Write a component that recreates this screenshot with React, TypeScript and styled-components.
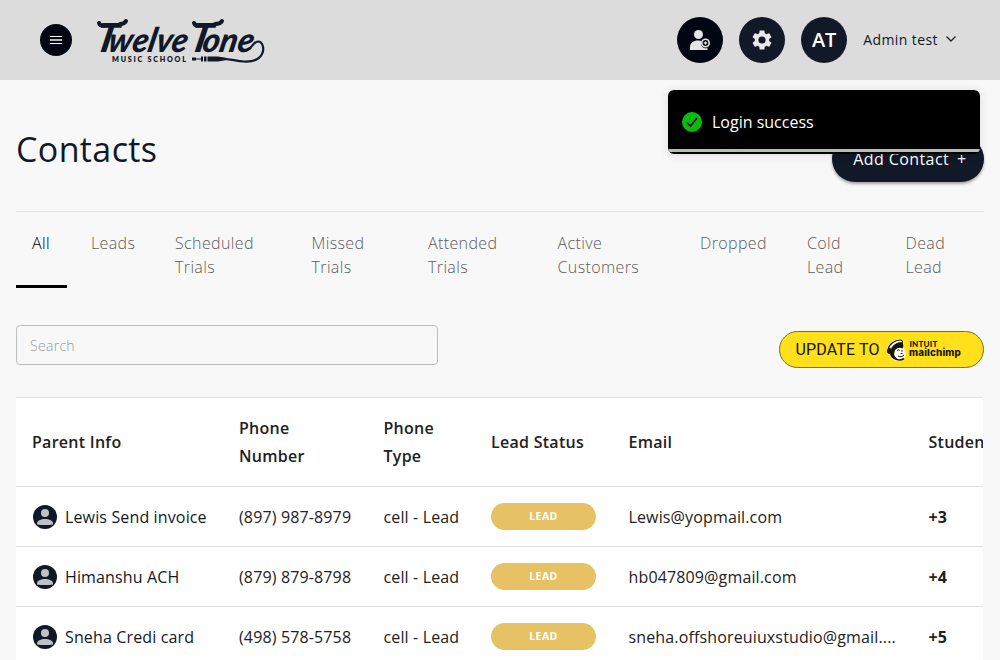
import React from "react";
import styled, { createGlobalStyle } from "styled-components";

const GlobalStyle = createGlobalStyle`
  * { box-sizing: border-box; }
  html, body { margin: 0; height: 100%; overflow: hidden; }
  body { background: #f8f8f8; color: #111827; font-family: "Open Sans", "Noto Sans", sans-serif; }
  button, input { font-family: inherit; }
`;

const Page = styled.div`
  height: 660px;
  overflow: hidden;
`;

const TopBar = styled.header`
  display: flex;
  align-items: center;
  height: 80px;
  padding: 0 43px 0 40px;
  background: #dcdcdc;
`;

const RoundButton = styled.button<{ $size: number; $dark?: boolean }>`
  display: flex;
  align-items: center;
  justify-content: center;
  width: ${(p) => p.$size}px;
  height: ${(p) => p.$size}px;
  padding: 0;
  border: 0;
  border-radius: 50%;
  background: ${(p) => (p.$dark ? "#000612" : "#111827")};
  color: #fff;
  font-size: 20px;
  line-height: 26px;
  font-weight: 600;
`;

const Logo = styled.svg`
  display: block;
  margin-left: 22px;
`;

const Actions = styled.div`
  display: flex;
  gap: 16px;
  margin-left: auto;
`;

const UserMenu = styled.div`
  display: flex;
  align-items: center;
  gap: 7px;
  margin-left: 16px;
  padding-bottom: 2px;
  font-size: 14px;
  letter-spacing: 0.42px;
`;

const Main = styled.main`
  padding: 0 16px;
`;

const TitleRow = styled.div`
  display: flex;
  justify-content: space-between;
  height: 132px;
  border-bottom: 1px solid #e3e3e3;
`;

const Title = styled.h1`
  margin: 45px 0 0;
  font-size: 34px;
  line-height: 48px;
  font-weight: 400;
  letter-spacing: 0.38px;
`;

const AddButton = styled.button`
  display: flex;
  align-items: center;
  justify-content: center;
  gap: 8px;
  width: 152px;
  height: 46px;
  margin-top: 56px;
  padding: 0 2px 0 6px;
  border: 0;
  border-radius: 23px;
  background: #111827;
  color: #fff;
  font-size: 16px;
  font-weight: 500;
  letter-spacing: 0.4px;
  white-space: nowrap;
  box-shadow: 0 2px 3px rgba(0, 0, 0, 0.35);
`;

const Tabs = styled.nav`
  display: grid;
  grid-template-columns: 51px 76px 128.5px 108.5px 121.5px 134.5px 99px 90.5px 94.5px;
  column-gap: 8px;
  height: 76px;
`;

const Tab = styled.a<{ $active?: boolean }>`
  padding: 19px 10px 0 16px;
  border-bottom: 3px solid ${(p) => (p.$active ? "#000" : "transparent")};
  color: ${(p) => (p.$active ? "#000" : "#5c5c5c")};
  font-size: 16px;
  line-height: 24px;
  font-weight: 340;
  letter-spacing: 0.38px;
`;

const Tools = styled.div`
  display: flex;
  align-items: flex-start;
  justify-content: space-between;
  height: 72px;
  margin-top: 37px;
`;

const Search = styled.input`
  width: 422px;
  height: 40px;
  padding: 0 13px;
  border: 1px solid #bdbdbd;
  border-radius: 4px;
  background: transparent;
  font-size: 14px;
  font-weight: 300;
  letter-spacing: 0.3px;
  &::placeholder { color: #999; opacity: 1; }
`;

const MailchimpButton = styled.button`
  display: flex;
  align-items: center;
  gap: 6px;
  width: 205px;
  height: 37px;
  margin-top: 6px;
  padding: 0 0 0 15.5px;
  border: 1px solid #7d6f1f;
  border-radius: 19px;
  background: #ffe01b;
  color: #111;
  font-family: Roboto, sans-serif;
  font-size: 16px;
  letter-spacing: 0.15px;
  white-space: nowrap;
`;

const Table = styled.section`
  width: 967px;
  overflow: hidden;
  border-top: 1px solid #e3e3e3;
  background: #fff;
`;

const Row = styled.div<{ $head?: boolean }>`
  display: grid;
  grid-template-columns: 207px 144.5px 107.5px 137.5px 300px 120px;
  align-items: center;
  height: ${(p) => (p.$head ? 89 : 60)}px;
  border-bottom: 1px solid #e0e0e0;
`;

const HeadCell = styled.div`
  padding: 0 16px;
  color: #212121;
  font-size: 16px;
  line-height: 28px;
  font-weight: 550;
  letter-spacing: 0.27px;
`;

const Cell = styled.div<{ $strong?: boolean }>`
  padding: 1px 0 0 16px;
  font-size: 16px;
  line-height: 24px;
  font-weight: ${(p) => (p.$strong ? 700 : 400)};
  letter-spacing: ${(p) => (p.$strong ? 0 : 0.14)}px;
  color: #222;
  white-space: nowrap;
`;

const Person = styled(Cell)`
  display: flex;
  align-items: center;
  gap: 7px;
  color: #111827;
`;

const Chip = styled.div`
  display: flex;
  align-items: center;
  justify-content: center;
  width: 105px;
  height: 27px;
  margin-left: 16px;
  padding-bottom: 1px;
  border-radius: 14px;
  background: #e7c265;
  color: #fff;
  font-size: 10.5px;
  font-weight: 700;
  letter-spacing: 0.4px;
`;

const Toast = styled.div`
  position: absolute;
  top: 90px;
  left: 668px;
  display: flex;
  align-items: center;
  gap: 10px;
  width: 312px;
  height: 64px;
  padding: 0 14px;
  overflow: hidden;
  border-radius: 6px;
  background: #000;
  color: #fff;
  font-size: 16px;
  font-weight: 430;
  box-shadow: 0 1px 10px rgba(0, 0, 0, 0.12);
`;

const Progress = styled.div`
  position: absolute;
  left: 0;
  right: 0;
  bottom: 2px;
  height: 3px;
  background: #b4c0b4;
`;

const tabs = ["All", "Leads", "Scheduled Trials", "Missed Trials", "Attended Trials", "Active Customers", "Dropped", "Cold Lead", "Dead Lead"];
const heads = ["Parent Info", "Phone Number", "Phone Type", "Lead Status", "Email", "Students"];
const rows = [
  ["Lewis Send invoice", "(897) 987-8979", "Lewis@yopmail.com", "+3"],
  ["Himanshu ACH", "(879) 879-8798", "hb047809@gmail.com", "+4"],
  ["Sneha Credi card", "(498) 578-5758", "sneha.offshoreuiuxstudio@gmail....", "+5"],
];

const SchoolLogo = () => (
  <Logo width="172" height="60" viewBox="94 10 172 60" fill="#111827">
    <g fontFamily="Lato, sans-serif" fontWeight="900" fontStyle="italic" fontSize="34">
      <text transform="translate(94 51.5) skewX(-12)" textLength="92" lengthAdjust="spacingAndGlyphs">
        <tspan fontSize="40">T</tspan><tspan dx="-9">welve</tspan>
      </text>
      <text transform="translate(188 51.5) skewX(-12)" textLength="64" lengthAdjust="spacingAndGlyphs">
        <tspan fontSize="40">T</tspan><tspan dx="-9">one</tspan>
      </text>
    </g>
    <g fill="none" stroke="#111827" strokeWidth="4" strokeLinecap="round">
      <path d="M99 23c1 3 4 3 8 2M120 24c3 0 5-1 6-3" />
      <path d="M194 23c1 3 4 3 8 2M215 24c3 0 6-1 7-3" />
    </g>
    <text x="112" y="61.5" fontFamily="Lato, sans-serif" fontWeight="800" fontSize="7.2" textLength="74">MUSIC SCHOOL</text>
    <path d="M249 49c4-3 5-7.500 9-7.500 5 0 6.500 8 4 12.500-3 6-9 8-18 7.500-9-.5-14-3-26-3" fill="none" stroke="#111827" strokeWidth="2.2" />
    <path d="M192 57.500h4v1h5v-2h17l9 1.500v2l-9 1.500h-17v-2h-5v1h-4z" />
    <path d="M203.500 56v6M207 56v6" stroke="#dcdcdc" strokeWidth="1" />
  </Logo>
);

const PersonPlusIcon = () => (
  <svg width="22" height="22" viewBox="0 0 22 22" fill="#e4e5e7">
    <circle cx="9.500" cy="5.500" r="4.500" />
    <path d="M1 21v-3c0-4 3.500-6.500 8-6.500 1.500 0 2.300.2 3.300.6a5.500 5.500 0 0 0 3.200 7.200h3V21z" />
    <circle cx="16.500" cy="14" r="3.700" fill="#000612" stroke="#e4e5e7" strokeWidth="1.600" />
    <path d="M16.500 12.200l.6 1.200 1.200.600-1.200.600-.6 1.200-.6-1.200-1.200-.6 1.200-.6z" stroke="#e4e5e7" strokeWidth=".5" />
  </svg>
);

const GearIcon = () => (
  <svg width="24" height="24" viewBox="0 0 24 24" fill="#e7e8e9">
    <path d="M19.140 12.940c.04-.3.060-.61.060-.94s-.02-.64-.07-.94l2.030-1.580a.49.49 0 0 0 .12-.61l-1.920-3.320a.488.488 0 0 0-.59-.22l-2.390.96a7.020 7.020 0 0 0-1.620-.94l-.36-2.540a.484.484 0 0 0-.48-.41h-3.840c-.24 0-.43.17-.47.41l-.36 2.540c-.59.24-1.130.57-1.620.94l-2.390-.96a.477.477 0 0 0-.59.22L2.740 8.870c-.12.21-.08.47.12.61l2.030 1.580c-.05.3-.09.63-.09.94s.02.64.07.94l-2.030 1.580a.49.49 0 0 0-.12.61l1.920 3.320c.12.22.37.29.59.22l2.390-.96c.5.38 1.030.7 1.620.94l.36 2.540c.05.24.24.41.48.41h3.840c.24 0 .44-.17.47-.41l.36-2.540c.59-.24 1.130-.56 1.620-.94l2.390.96c.22.08.47 0 .59-.22l1.920-3.320a.49.49 0 0 0-.12-.61zM12 15.600a3.600 3.600 0 1 1 0-7.200 3.600 3.600 0 0 1 0 7.200" />
  </svg>
);

const Avatar = () => (
  <svg width="26" height="24" viewBox="0 0 26 24">
    <circle cx="13" cy="12" r="12" fill="#111827" />
    <circle cx="13" cy="8" r="4" fill="#bfc1c5" />
    <path d="M5 18.500c0-3 4-4.500 8-4.500s8 1.500 8 4.500v1c-5 .7-11 .7-16 0z" fill="#bfc1c5" />
  </svg>
);

const MailchimpLogo = () => (
  <svg width="78" height="24" viewBox="0 0 78 24" fill="#17140a">
    <path d="M1 12C1 6 8 1 14 1c3 0 4 2 3 4 2 2 1 4 1 5l2 5c1 4-3 8-8 8-4 0-7-2-8-6-3 0-4-3-2-5z" fill="#fff6b0" />
    <path d="M8 6c3-4 9-4 9 0 1 2 0 4-1 5-2-2-5-1-7 1l-1 4c0 2 2 4 5 5-4 2-8-1-9-5-3 0-4-3-2-5 2-1 3 0 4 0 0-1 1-3 2-5z" />
    <path d="M2 11.500C3 6 9 2 14 2c2 0 3 1 2 3-4-1-8 2-10 5-1 0-3 .5-4 1.500z" fill="#fff" stroke="#17140a" strokeWidth="1.200" />
    <path d="M10 12c2-3 6-3 7 0l1 4c2 2-2 5-5 5s-4-2-4-5z" fill="#fff" />
    <path d="M11 12.500c1-.8 2-.8 3 0M16 12v1.800M14.500 15.500h2M12 18c2 1 4 1 6-1" fill="none" stroke="#17140a" strokeWidth="1" />
    <path d="M8 19c2 3 6 4 10 1.500" fill="none" stroke="#17140a" strokeWidth="1.600" />
    <text x="23.500" y="9" fontFamily="Lato, sans-serif" fontWeight="900" fontSize="7" textLength="28" lengthAdjust="spacingAndGlyphs">INTUIT</text>
    <text x="23" y="18" fontFamily="Inter, sans-serif" fontWeight="800" fontSize="9.5" textLength="52" lengthAdjust="spacingAndGlyphs">mailchimp</text>
  </svg>
);

export default function App() {
  return (
    <Page>
      <GlobalStyle />
      <TopBar>
        <RoundButton $size={32} $dark aria-label="Menu">
          <svg width="12" height="8" viewBox="0 0 12 8">
            <path d="M0 .5h12M0 7.500h12" stroke="#fff" />
            <path d="M0 4h12" stroke="#b3b4b8" strokeWidth="2" />
          </svg>
        </RoundButton>
        <SchoolLogo />
        <Actions>
          <RoundButton $size={46} $dark aria-label="Add user"><PersonPlusIcon /></RoundButton>
          <RoundButton $size={46} aria-label="Settings"><GearIcon /></RoundButton>
          <RoundButton $size={46}>AT</RoundButton>
        </Actions>
        <UserMenu>
          Admin test
          <svg width="12" height="8" viewBox="0 0 12 8" fill="none" stroke="#222" strokeWidth="1.300"><path d="M1.500 1.500 6 6l4.500-4.500" /></svg>
        </UserMenu>
      </TopBar>
      <Main>
        <TitleRow>
          <Title>Contacts</Title>
          <AddButton>Add Contact <span>+</span></AddButton>
        </TitleRow>
        <Tabs>
          {tabs.map((t, i) => <Tab key={t} $active={i === 0}>{t}</Tab>)}
        </Tabs>
        <Tools>
          <Search placeholder="Search" />
          <MailchimpButton>UPDATE TO <MailchimpLogo /></MailchimpButton>
        </Tools>
        <Table>
          <Row $head>{heads.map((h) => <HeadCell key={h}>{h}</HeadCell>)}</Row>
          {rows.map(([name, phone, email, count]) => (
            <Row key={name}>
              <Person><Avatar />{name}</Person>
              <Cell>{phone}</Cell>
              <Cell>cell - Lead</Cell>
              <Chip>LEAD</Chip>
              <Cell>{email}</Cell>
              <Cell $strong>{count}</Cell>
            </Row>
          ))}
        </Table>
      </Main>
      <Toast>
        <svg width="20" height="20" viewBox="0 0 20 20"><circle cx="10" cy="10" r="10" fill="#07bc0c" /><path d="m5 10.500 3.500 3.500L15 6" fill="none" stroke="#000" strokeWidth="1.600" /></svg>
        Login success
        <Progress />
      </Toast>
    </Page>
  );
}
